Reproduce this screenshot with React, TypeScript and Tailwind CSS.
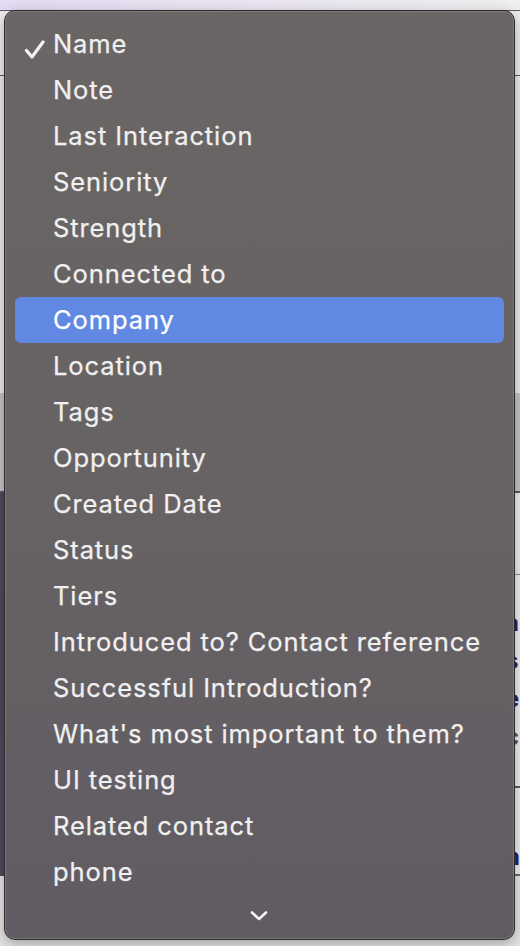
import React from 'react';

const items = [
  'Name',
  'Note',
  'Last Interaction',
  'Seniority',
  'Strength',
  'Connected to',
  'Company',
  'Location',
  'Tags',
  'Opportunity',
  'Created Date',
  'Status',
  'Tiers',
  'Introduced to? Contact reference',
  'Successful Introduction?',
  "What's most important to them?",
  'UI testing',
  'Related contact',
  'phone',
];

function Check() {
  return (
    <svg width="22" height="20" viewBox="0 0 22 20" className="absolute left-[-29px] top-[15px]">
      <path d="M2.5 10.5 L8 17 L19 2" fill="none" stroke="#f2f2f2" strokeWidth="3.2" strokeLinecap="round" strokeLinejoin="round" />
    </svg>
  );
}

function Chevron() {
  return (
    <svg width="20" height="12" viewBox="0 0 20 12">
      <path d="M3 2.5 L10 9 L17 2.5" fill="none" stroke="#f4f4f4" strokeWidth="2.6" strokeLinecap="round" strokeLinejoin="round" />
    </svg>
  );
}

export default function App() {
  const selected = 'Name';
  const active = 'Company';

  return (
    <div className="relative w-[520px] h-[946px] overflow-hidden bg-[#ececec] font-['Inter','Liberation_Sans',sans-serif]">
      {/* page behind the menu */}
      <div className="flex flex-col">
        <div className="h-[10px] bg-gradient-to-r from-[#e4dcf2] via-[#ebe6f3] to-[#efefef]" />
        <div className="h-[66px] border-t border-b border-[#5e5a72] bg-[#eeeeee]" />
        <div className="h-[317px] bg-[#ececec]" />
        <div className="h-[100px] bg-[#c4c4ca] border-b-2 border-[#5e5a6e]" />
        <div className="flex h-[383px]">
          <div className="w-[60px] bg-[#4b4b5d]" />
          <div className="flex-1 flex flex-col bg-[#eeeeee] pl-[454px] text-[#2e1d6b] font-bold text-[24px] leading-[38px]">
            <div className="text-[#8a8a8a] font-normal h-[84px] pt-[34px] leading-[30px] border-b border-[#8a8a94]">t</div>
            <div className="pt-[29px]">a</div>
            <div>s</div>
            <div>e</div>
            <div className="text-[#555]">c</div>
            <div className="h-[32px] leading-[32px] border-b-2 border-[#5e5a6e] text-[#444]">i</div>
            <div className="pt-[12px]">r</div>
            <div className="h-[38px] border-b-2 border-[#6a6a78]">h</div>
          </div>
        </div>
        <div className="h-[70px] bg-[#e6e6e6]" />
      </div>

      {/* popup menu */}
      <div className="absolute left-[4px] top-[10px] w-[511px] h-[930px] rounded-[11px] border border-[#2c2a2c] shadow-[0_4px_14px_rgba(0,0,0,0.3)] bg-gradient-to-b from-[#6a6665] via-[#676263] to-[#615c63]">
        <div className="h-full rounded-[10px] border border-[#8a8686]/60 flex flex-col pt-[9px]">
          {items.map((item) => (
            <div
              key={item}
              className={
                'mx-[9px] h-[46px] rounded-[6px] flex items-center pl-[38px] ' +
                (item === active ? 'bg-[#6189e3] text-white' : 'text-[#f0f0f0]')
              }
            >
              <span className="relative text-[25.5px] tracking-[0.9px] [-webkit-text-stroke:0.25px_currentColor]">
                {item === selected && <Check />}
                {item}
              </span>
            </div>
          ))}
          <div className="flex justify-center pt-[15px] pr-[2px]">
            <Chevron />
          </div>
        </div>
      </div>
    </div>
  );
}
